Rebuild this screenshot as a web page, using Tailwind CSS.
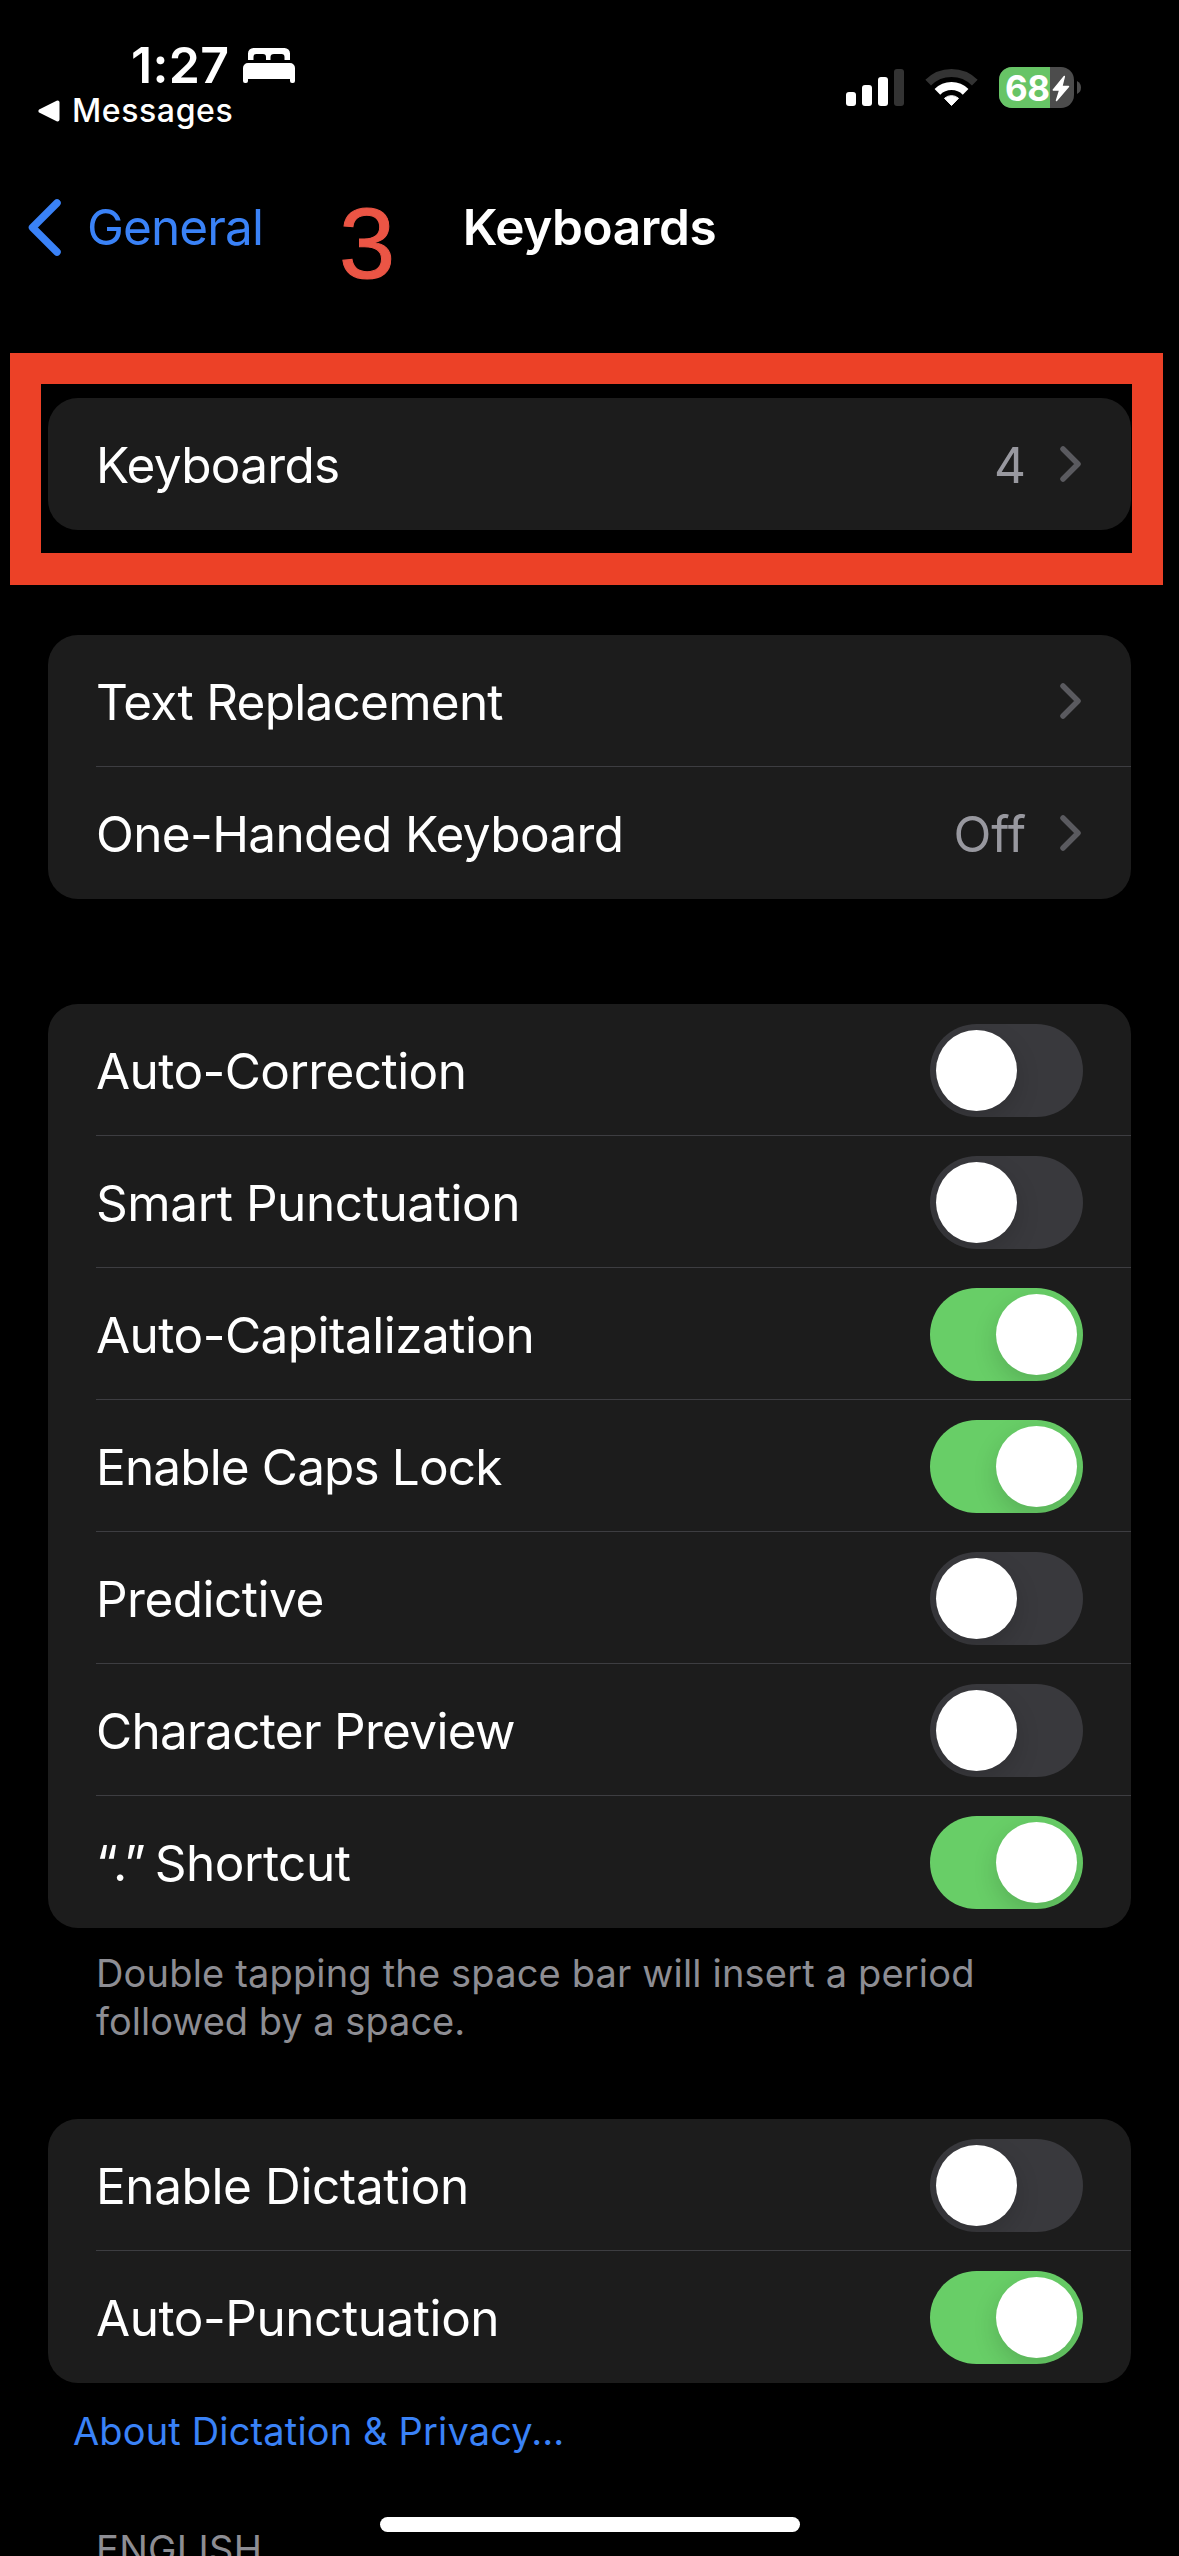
<!DOCTYPE html>
<html lang="en">
<head>
<meta charset="utf-8">
<title>Keyboards</title>
<script src="https://cdn.jsdelivr.net/npm/@tailwindcss/browser@4"></script>
</head>
<body class="bg-black">
<div class="relative h-[2556px] w-[1179px] overflow-hidden bg-black font-['Inter',sans-serif] text-[49.5px] leading-[60px] text-white whitespace-nowrap">

  <!-- Status bar -->
  <header class="flex h-32 justify-between pt-[37px] pr-[98px]">
    <div class="flex flex-col">
      <div class="flex h-14 items-start pl-[131px]">
        <span class="w-28 text-[50px] leading-[56px] font-semibold tracking-[0.3px]">1:27</span>
        <svg class="mt-[11px]" width="52" height="35" viewBox="0 0 52 35" fill="#fff">
          <path d="M5 12V5.500A5.500 5.500 0 0 1 10.500 0H41.500A5.500 5.500 0 0 1 47 5.500V12H41.500V9Q41.500 6 38.500 6H31Q27.500 6 27.500 9V12H23V9Q23 6 20 6H13.500Q10.500 6 10.500 9V12Z"/>
          <path d="M0 20A5 5 0 0 1 5 15H47A5 5 0 0 1 52 20V33Q52 35 50 35H49Q47 35 47 33V31H5V33Q5 35 3 35H2Q0 35 0 33Z"/>
        </svg>
      </div>
      <div class="flex h-[35px] items-center gap-3 pl-[38px]">
        <svg width="22" height="22" viewBox="0 0 22 22"><path d="M2.500 11L19.500 2.500V19.500Z" fill="#fff" stroke="#fff" stroke-width="4" stroke-linejoin="round"/></svg>
        <span class="text-[32px] leading-[35px] font-medium tracking-[0.6px]">Messages</span>
      </div>
    </div>
    <svg class="mt-[30px]" width="235" height="41" viewBox="0 0 235 41">
      <g fill="#fff">
        <rect x="0" y="25" width="10" height="14" rx="3"/>
        <rect x="16" y="18" width="10" height="21" rx="3"/>
        <rect x="32" y="10" width="10" height="29" rx="3"/>
        <rect x="48" y="2" width="10" height="37" rx="3" fill="#333"/>
      </g>
      <g fill="none" stroke-width="8">
        <path d="M82.200 15.700A33 33 0 0 1 128.800 15.700" stroke="#333"/>
        <path d="M91.400 24.900A20 20 0 0 1 119.600 24.900" stroke="#fff"/>
      </g>
      <path d="M105.500 38.500L98.500 31.300A10.500 10.500 0 0 1 112.500 31.300Z" fill="#fff" stroke="#fff" stroke-linejoin="round"/>
      <clipPath id="cell"><rect x="153" y="0" width="75" height="41" rx="13"/></clipPath>
      <g clip-path="url(#cell)">
        <rect x="153" width="75" height="41" fill="#4c4c4c"/>
        <rect x="153" width="51" height="41" fill="#67c466"/>
      </g>
      <path d="M231 14Q235 16 235 20.500T231 27Z" fill="#4c4c4c"/>
      <text x="159" y="33.500" fill="#fff" font-family="Inter" font-size="35" font-weight="700" letter-spacing="-0.500">68</text>
      <path d="M218.300 9.500L207.300 23H213.800L210.500 33.500L222.500 19.500H215.800Z" fill="#fff" stroke="#fff" stroke-width="1.500" stroke-linejoin="round"/>
    </svg>
  </header>

  <!-- Navigation bar -->
  <nav class="grid h-[198px] grid-cols-[1fr_auto_1fr] items-center">
    <a class="flex items-center gap-[26px] pl-7 text-[#3a82f7]">
      <svg width="33" height="57" viewBox="0 0 33 57" fill="none" stroke="currentColor" stroke-width="7.500" stroke-linecap="round" stroke-linejoin="round"><path d="M29 4L4.500 28.500L29 53"/></svg>
      <span class="tracking-[-0.9px]">General</span>
    </a>
    <h1 class="font-semibold tracking-[-0.4px]">Keyboards</h1>
  </nav>

  <main class="px-12 pt-[72px]">
    <section class="rounded-[30px] bg-[#1c1c1c]">
      <div class="flex h-[132px] items-center pr-[50px] pl-12">
        <span class="flex-1 pt-0.5 tracking-[-0.7px]">Keyboards</span>
        <span class="pt-0.5 pr-[34px] text-[#98989f]">4</span>
        <svg width="21" height="36" viewBox="0 0 21 36" fill="none" stroke="#5a5a5f" stroke-width="5.500" stroke-linecap="round" stroke-linejoin="round"><path d="M3 3L18 18L3 33"/></svg>
      </div>
    </section>

    <section class="mt-[105px] rounded-[30px] bg-[#1c1c1c] pl-12">
      <div class="flex h-[132px] items-center border-b border-[#3d3d41] pr-[50px]">
        <span class="flex-1 pt-0.5 tracking-[-0.75px]">Text Replacement</span>
        <svg width="21" height="36" viewBox="0 0 21 36" fill="none" stroke="#5a5a5f" stroke-width="5.500" stroke-linecap="round" stroke-linejoin="round"><path d="M3 3L18 18L3 33"/></svg>
      </div>
      <div class="flex h-[132px] items-center pr-[50px]">
        <span class="flex-1 pt-0.5 tracking-[-0.64px]">One-Handed Keyboard</span>
        <span class="pt-0.5 pr-[34px] text-[#98989f]">Off</span>
        <svg width="21" height="36" viewBox="0 0 21 36" fill="none" stroke="#5a5a5f" stroke-width="5.500" stroke-linecap="round" stroke-linejoin="round"><path d="M3 3L18 18L3 33"/></svg>
      </div>
    </section>

    <section class="mt-[105px] rounded-[30px] bg-[#1c1c1c] pl-12">
      <div class="flex h-[132px] items-center justify-between border-b border-[#3d3d41] pr-12">
        <span class="pt-0.5 tracking-[-0.57px]">Auto-Correction</span>
        <span class="mt-0.5 flex h-[93px] w-[153px] overflow-hidden rounded-full bg-[#39393d] p-1.5"><span class="size-[81px] rounded-full bg-white shadow-[0_9px_24px_rgba(0,0,0,0.15)]"></span></span>
      </div>
      <div class="flex h-[132px] items-center justify-between border-b border-[#3d3d41] pr-12">
        <span class="pt-0.5 tracking-[-0.42px]">Smart Punctuation</span>
        <span class="mt-0.5 flex h-[93px] w-[153px] overflow-hidden rounded-full bg-[#39393d] p-1.5"><span class="size-[81px] rounded-full bg-white shadow-[0_9px_24px_rgba(0,0,0,0.15)]"></span></span>
      </div>
      <div class="flex h-[132px] items-center justify-between border-b border-[#3d3d41] pr-12">
        <span class="pt-0.5 tracking-[-0.53px]">Auto-Capitalization</span>
        <span class="mt-0.5 flex h-[93px] w-[153px] justify-end overflow-hidden rounded-full bg-[#68ce67] p-1.5"><span class="size-[81px] rounded-full bg-white shadow-[0_9px_24px_rgba(0,0,0,0.15)]"></span></span>
      </div>
      <div class="flex h-[132px] items-center justify-between border-b border-[#3d3d41] pr-12">
        <span class="pt-0.5 tracking-[-0.86px]">Enable Caps Lock</span>
        <span class="mt-0.5 flex h-[93px] w-[153px] justify-end overflow-hidden rounded-full bg-[#68ce67] p-1.5"><span class="size-[81px] rounded-full bg-white shadow-[0_9px_24px_rgba(0,0,0,0.15)]"></span></span>
      </div>
      <div class="flex h-[132px] items-center justify-between border-b border-[#3d3d41] pr-12">
        <span class="pt-0.5 tracking-[-0.5px]">Predictive</span>
        <span class="mt-0.5 flex h-[93px] w-[153px] overflow-hidden rounded-full bg-[#39393d] p-1.5"><span class="size-[81px] rounded-full bg-white shadow-[0_9px_24px_rgba(0,0,0,0.15)]"></span></span>
      </div>
      <div class="flex h-[132px] items-center justify-between border-b border-[#3d3d41] pr-12">
        <span class="pt-0.5 tracking-[-0.7px]">Character Preview</span>
        <span class="mt-0.5 flex h-[93px] w-[153px] overflow-hidden rounded-full bg-[#39393d] p-1.5"><span class="size-[81px] rounded-full bg-white shadow-[0_9px_24px_rgba(0,0,0,0.15)]"></span></span>
      </div>
      <div class="flex h-[132px] items-center justify-between border-b border-transparent pr-12">
        <span class="pt-0.5 tracking-[-0.5px] [word-spacing:-4px]">“.” Shortcut</span>
        <span class="mt-0.5 flex h-[93px] w-[153px] justify-end overflow-hidden rounded-full bg-[#68ce67] p-1.5"><span class="size-[81px] rounded-full bg-white shadow-[0_9px_24px_rgba(0,0,0,0.15)]"></span></span>
      </div>
    </section>
    <p class="mt-[21px] pl-12 text-[38px] leading-[48px] text-[#8d8d93]"><span class="tracking-[0.17px]">Double tapping the space bar will insert a period</span><br>followed by a space.</p>

    <section class="mt-[74px] rounded-[30px] bg-[#1c1c1c] pl-12">
      <div class="flex h-[132px] items-center justify-between border-b border-[#3d3d41] pr-12">
        <span class="pt-0.5 tracking-[-0.4px]">Enable Dictation</span>
        <span class="mt-0.5 flex h-[93px] w-[153px] overflow-hidden rounded-full bg-[#39393d] p-1.5"><span class="size-[81px] rounded-full bg-white shadow-[0_9px_24px_rgba(0,0,0,0.15)]"></span></span>
      </div>
      <div class="flex h-[132px] items-center justify-between border-b border-transparent pr-12">
        <span class="pt-0.5 tracking-[-0.45px]">Auto-Punctuation</span>
        <span class="mt-0.5 flex h-[93px] w-[153px] justify-end overflow-hidden rounded-full bg-[#68ce67] p-1.5"><span class="size-[81px] rounded-full bg-white shadow-[0_9px_24px_rgba(0,0,0,0.15)]"></span></span>
      </div>
    </section>
    <a class="mt-6 block pl-[25px] text-[38px] leading-[48px] tracking-[0.15px] text-[#3a82f7]">About Dictation &amp; Privacy...</a>
    <h2 class="mt-[70px] pl-12 text-[38px] leading-[48px] tracking-[0.3px] text-[#8d8d93]">ENGLISH</h2>
  </main>

  <!-- Step annotation and highlight frame -->
  <span class="absolute top-[193px] left-[339px] font-['Liberation_Sans',sans-serif] text-[101px] leading-[100px] text-[#eb5545] [-webkit-text-stroke:1px_#eb5545]">3</span>
  <div class="absolute top-[353px] left-[10px] h-[232px] w-[1153px] border-[31px] border-b-[32px] border-[#ec4127]"></div>

  <!-- Home indicator -->
  <div class="absolute top-[2517px] left-[380px] h-[15px] w-[420px] rounded-full bg-white"></div>
</div>
</body>
</html>
